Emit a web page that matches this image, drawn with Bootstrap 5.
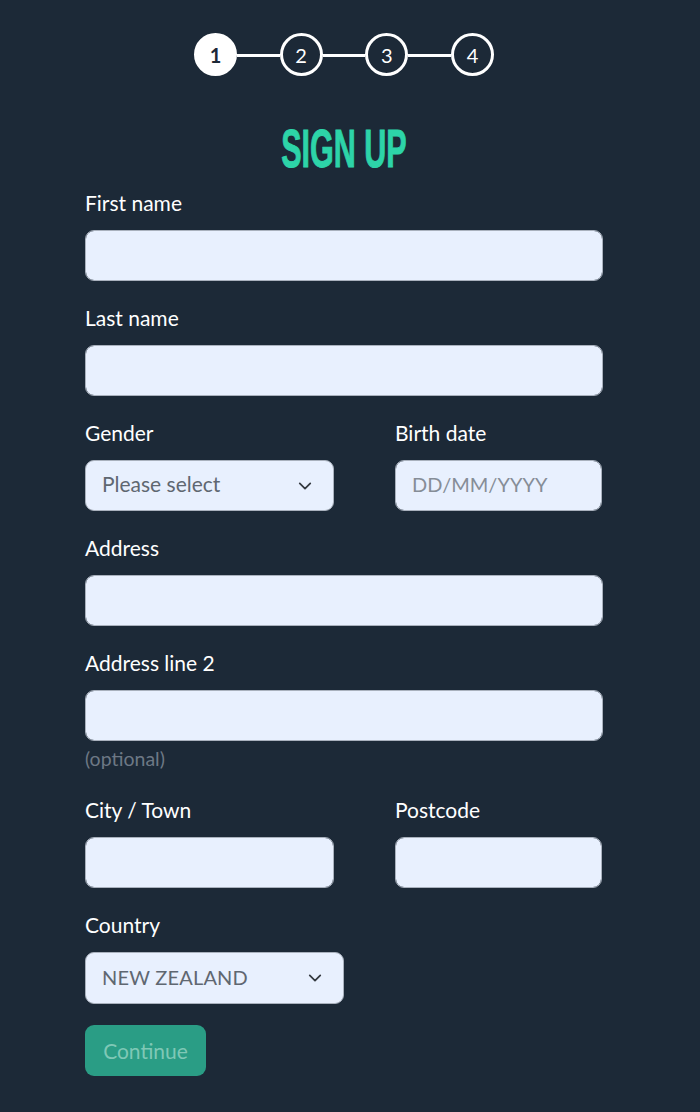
<!DOCTYPE html>
<html lang="en"><head><meta charset="utf-8">
<title>Sign up</title>
<link href="https://cdn.jsdelivr.net/npm/bootstrap@5.3.0/dist/css/bootstrap.min.css" rel="stylesheet">
<style>
html,body{height:100%}
body{background:#1c2937;font-family:"Lato","Noto Sans",sans-serif;color:#fff;overflow:hidden}
.signup-wrap{width:518px;margin-left:85px;padding-top:33px}
.stepper{margin-left:109px;width:300px;height:43px}
.step-dot{width:43px;height:43px;flex:none;border:3px solid #fff;border-radius:50%;font-size:20px;line-height:1;color:#fff;background:#1c2937}
.step-dot.on{background:#fff;color:#1c2937;font-weight:700}
.step-line{flex:1;height:3px;background:#fff;margin-top:2px}
.signup-title{font-family:"Liberation Sans Narrow","Liberation Sans",sans-serif;font-weight:700;font-size:54px;line-height:54px;color:#2dd4a8;margin:45px 0 0;transform:scaleX(.565);-webkit-text-stroke:1px #2dd4a8}
.field-stack{margin-top:13px}
.field-gap{margin-bottom:22px}
.fld-label{font-size:21px;line-height:30px;margin-bottom:12px;display:block;color:#fff}
.fld-input{height:51px;background-color:#e8f0fe;border:1px solid #a9b1bd;border-radius:9px;font-size:20px;font-family:"Lato",sans-serif;color:#5f6771;padding:0 16px 3px}
.fld-input::placeholder{color:#868d97}
.fld-input:focus{background-color:#e8f0fe}
.fld-select{background-position:right 19px center;background-size:18px 14px;padding-right:40px;color:#5f6771}
.sel-gender{font-size:21px}
.col-left{width:249px}
.col-right{width:207px;margin-right:1px}
.col-country{width:259px;height:52px;letter-spacing:.2px}
.hint-text{font-size:19.5px;line-height:24px;color:#6d7885;margin-top:6px}
.hint-gap{margin-bottom:24px}
.go-btn{width:121px;height:51px;border-radius:9px;background:#2a9d85;border:0;color:#7fc8b6;font-size:21px;padding:0;margin-top:-1px;opacity:1}
</style></head>
<body>
<main class="signup-wrap">
  <div class="stepper d-flex align-items-center">
    <div class="step-dot on d-flex align-items-center justify-content-center">1</div>
    <div class="step-line"></div>
    <div class="step-dot d-flex align-items-center justify-content-center">2</div>
    <div class="step-line"></div>
    <div class="step-dot d-flex align-items-center justify-content-center">3</div>
    <div class="step-line"></div>
    <div class="step-dot d-flex align-items-center justify-content-center">4</div>
  </div>
  <h1 class="signup-title text-center">SIGN UP</h1>
  <form class="field-stack">
    <div class="field-gap"><label class="fld-label">First name</label><input class="form-control fld-input" type="text"></div>
    <div class="field-gap"><label class="fld-label">Last name</label><input class="form-control fld-input" type="text"></div>
    <div class="field-gap d-flex justify-content-between">
      <div class="col-left"><label class="fld-label">Gender</label><select class="form-select fld-input fld-select sel-gender"><option>Please select</option></select></div>
      <div class="col-right"><label class="fld-label">Birth date</label><input class="form-control fld-input" type="text" placeholder="DD/MM/YYYY"></div>
    </div>
    <div class="field-gap"><label class="fld-label">Address</label><input class="form-control fld-input" type="text"></div>
    <div class="hint-gap"><label class="fld-label">Address line 2</label><input class="form-control fld-input" type="text"><div class="hint-text">(optional)</div></div>
    <div class="field-gap d-flex justify-content-between">
      <div class="col-left"><label class="fld-label">City / Town</label><input class="form-control fld-input" type="text"></div>
      <div class="col-right"><label class="fld-label">Postcode</label><input class="form-control fld-input" type="text"></div>
    </div>
    <div class="field-gap"><label class="fld-label">Country</label><select class="form-select fld-input fld-select col-country"><option>NEW ZEALAND</option></select></div>
    <button type="button" class="btn go-btn">Continue</button>
  </form>
</main>
<script src="https://cdn.jsdelivr.net/npm/bootstrap@5.3.0/dist/js/bootstrap.bundle.min.js"></script>
</body></html>
